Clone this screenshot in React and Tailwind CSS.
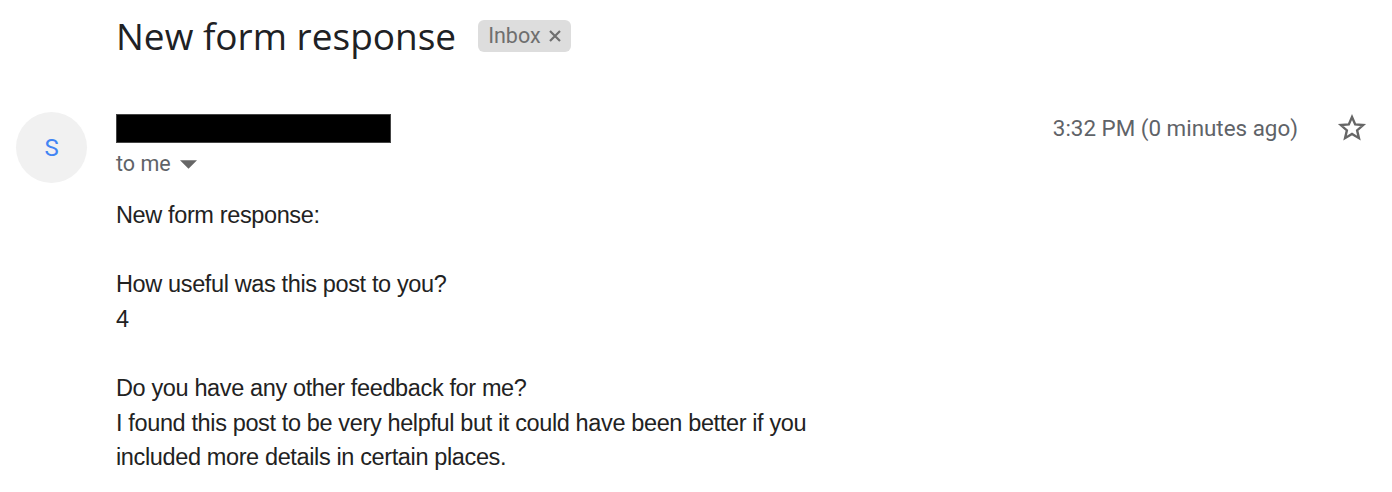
export default function App() {
  return (
    <div className="w-[1392px] h-[492px] bg-white overflow-hidden relative">
      <div className="flex items-center pl-[116px] pt-[14px]">
        <h1 className="text-[37px] leading-[44px] text-[#202124]" style={{ fontFamily: '"Open Sans", Roboto, sans-serif' }}>New form response</h1>
        <div className="ml-[22px] h-[32px] pl-[10px] pr-[9px] bg-[#dddddd] rounded-[6px] flex items-center text-[#6f6f6f] text-[21.5px]" style={{ fontFamily: 'Roboto, sans-serif' }}>
          <span>Inbox</span>
          <svg className="ml-[7px]" width="14" height="14" viewBox="0 0 14 14"><path d="M2 2l10 10M12 2L2 12" stroke="#6f6f6f" strokeWidth="2.2"/></svg>
        </div>
      </div>
      <div className="flex mt-[54px]">
        <div className="w-[116px] flex pl-[16px]">
          <div className="w-[71px] h-[71px] rounded-full bg-[#f1f1f1] flex items-center justify-center text-[#4285f4] text-[24px]" style={{ fontFamily: 'Roboto, sans-serif' }}>S</div>
        </div>
        <div className="flex-1 flex flex-col">
          <div className="flex items-start justify-between h-[32px] pt-[2px]">
            <div className="w-[275px] h-[29px] bg-black border border-[#444]"></div>
            <div className="flex items-center pr-[25px]">
              <span className="text-[#5f6368] text-[22.4px] leading-[29px]" style={{ fontFamily: 'Roboto, sans-serif' }}>3:32 PM (0 minutes ago)</span>
              <svg className="ml-[39px] -mt-[1px]" width="30" height="30" viewBox="0 0 24 24"><path d="M12 3.2l2.55 5.9 6.4.55-4.86 4.2 1.46 6.27L12 16.8l-5.550 3.32 1.46-6.27-4.86-4.2 6.4-.55z" fill="none" stroke="#666666" strokeWidth="1.9" strokeLinejoin="miter"/></svg>
            </div>
          </div>
          <div className="flex items-center h-[40px] text-[#5f6368] text-[21.5px]" style={{ fontFamily: 'Roboto, sans-serif' }}>
            <span>to me</span>
            <svg className="ml-[9px]" width="17" height="9" viewBox="0 0 10 5"><path d="M0 0l5 5 5-5z" fill="#666"/></svg>
          </div>
          <div className="mt-[14px] text-[#222222] text-[23.5px] leading-[34.6px] tracking-[-0.37px]" style={{ fontFamily: '"Liberation Sans", Arial, sans-serif' }}>
            <div>New form response:</div>
            <div className="h-[34.6px]"></div>
            <div>How useful was this post to you?</div>
            <div>4</div>
            <div className="h-[34.6px]"></div>
            <div>Do you have any other feedback for me?</div>
            <div>I found this post to be very helpful but it could have been better if you</div>
            <div>included more details in certain places.</div>
          </div>
        </div>
      </div>
    </div>
  );
}
